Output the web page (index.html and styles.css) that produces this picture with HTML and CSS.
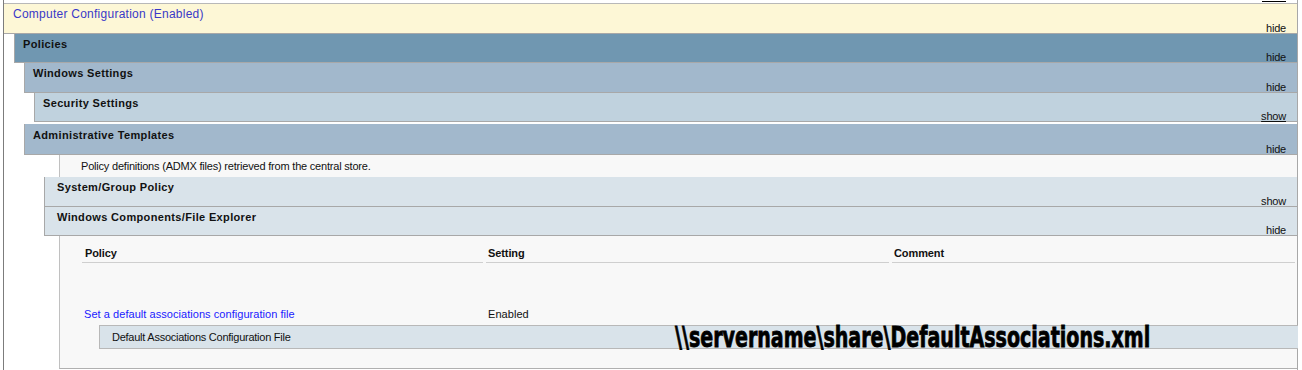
FILE: index.html
```html
<!DOCTYPE html>
<html lang="en">
<head>
    <meta charset="UTF-8">
    <title>Group Policy Report</title>
    <link rel="stylesheet" href="styles.css">
</head>
<body>

<div class="report">
    <div class="topline"><span class="tail"></span></div>

    <div class="section">
        <div class="head h0"><span class="title">Computer Configuration (Enabled)</span><span class="toggle">hide</span></div>
        <div class="body">

            <div class="section lvl">
                <div class="head h1"><span class="title">Policies</span><span class="toggle">hide</span></div>
                <div class="body">

                    <div class="section lvl spaced">
                        <div class="head h2"><span class="title">Windows Settings</span><span class="toggle">hide</span></div>
                        <div class="body">
                            <div class="section lvl">
                                <div class="head h3"><span class="title">Security Settings</span><span class="toggle hover">show</span></div>
                            </div>
                        </div>
                    </div>

                    <div class="section lvl">
                        <div class="head h2 adm"><span class="title">Administrative Templates</span><span class="toggle">hide</span></div>
                        <div class="body">
                            <div class="explain">Policy definitions (ADMX files) retrieved from the central store.</div>

                            <div class="section lvl2">
                                <div class="head h4"><span class="title">System/Group Policy</span><span class="toggle">show</span></div>
                            </div>

                            <div class="section lvl2">
                                <div class="head h4 short"><span class="title">Windows Components/File Explorer</span><span class="toggle">hide</span></div>
                                <div class="body">
                                    <div class="policies">
                                        <div class="grid">
                                            <div class="th first">Policy</div>
                                            <div class="th">Setting</div>
                                            <div class="th">Comment</div>
                                        </div>
                                        <div class="grid row">
                                            <div class="td"><span class="link">Set a default associations configuration file</span></div>
                                            <div class="td">Enabled</div>
                                            <div class="td"></div>
                                        </div>
                                        <div class="subrow">
                                            <span class="sublabel">Default Associations Configuration File</span>
                                            <span class="subvalue">\\servername\share\DefaultAssociations.xml</span>
                                        </div>
                                    </div>
                                </div>
                            </div>

                        </div>
                    </div>

                </div>
            </div>

        </div>
    </div>
</div>

</body>
</html>
```

FILE: styles.css
```css
body {
    margin: 0;
    font-family: "Liberation Sans", Arial, sans-serif;
    font-size: 11px;
    color: #111;
    background: #fff;
}
.report {
    margin-left: 3px;
    width: 1293px;
    border-left: 1px solid #7c7c7c;
    border-right: 1px solid #a8a8a8;
    height: 370px;
}
.topline {
    height: 3px;
    border-bottom: 1px solid #b8b8b8;
    display: flex;
    justify-content: flex-end;
}
.tail {
    width: 24px;
    height: 1px;
    margin: 1px 11px 0 0;
    background: #000;
}
.lvl {
    margin-left: 10px;
}
.lvl2 {
    margin-left: 20px;
}
.spaced {
    margin-bottom: 2px;
}
.head {
    box-sizing: border-box;
    height: 30px;
    display: flex;
    flex-direction: column;
    justify-content: space-between;
    padding: 4px 11px 0 8px;
    border-left: 1px solid #a8a8a8;
    border-bottom: 1px solid #a8a8a8;
}
.head .title {
    font-weight: bold;
    line-height: 13px;
    letter-spacing: 0.35px;
}
.toggle {
    align-self: flex-end;
    line-height: 10px;
    letter-spacing: -0.2px;
}
.hover {
    text-decoration: underline;
}
.h0 {
    background: #fdf7d6;
    border-left: none;
    padding: 3px 11px 0 9px;
}
.h0 .title {
    font-weight: normal;
    font-size: 12px;
    line-height: 14px;
    letter-spacing: 0.25px;
    color: #3a38c8;
}
.h1 {
    height: 29px;
    background: #7097b1;
}
.h2 {
    background: #a2b8cc;
}
.adm {
    height: 31px;
    padding-top: 5px;
}
.h3 {
    height: 29px;
    background: #c0d2de;
}
.h4 {
    background: #d9e3ea;
    padding-left: 12px;
}
.short {
    height: 29px;
}
.explain {
    margin-left: 35px;
    height: 22px;
    box-sizing: border-box;
    padding: 5px 0 0 21px;
    border-left: 1px solid #c0c0c0;
    background: #f8f8f8;
    letter-spacing: -0.2px;
}
.policies {
    margin-left: 15px;
    height: 133px;
    box-sizing: border-box;
    padding: 9px 2px 0 22px;
    border-left: 1px solid #c0c0c0;
    border-bottom: 1px solid #b0b0b0;
    background: #f8f8f8;
}
.grid {
    display: grid;
    grid-template-columns: 401px 403px 1fr;
    column-gap: 3px;
}
.th {
    font-weight: bold;
    line-height: 14px;
    padding: 1px 0 2px 2px;
    border-bottom: 1px solid #cfcfcf;
    letter-spacing: -0.1px;
}
.th.first {
    padding-left: 3px;
}
.row {
    margin-top: 44px;
}
.td {
    line-height: 14px;
    padding-left: 2px;
    letter-spacing: 0.05px;
}
.link {
    color: #1a1aff;
}
.subrow {
    display: flex;
    align-items: center;
    margin: 4px -3px 0 17px;
    height: 24px;
    box-sizing: border-box;
    border: 1px solid #b8b8b8;
    border-right: none;
    background: #d9e3ea;
}
.sublabel {
    flex-shrink: 0;
    width: 563px;
    padding-left: 12px;
    letter-spacing: -0.25px;
}
.subvalue {
    flex-shrink: 0;
    display: inline-block;
    font-family: "DejaVu Sans Condensed", "DejaVu Sans", sans-serif;
    font-weight: bold;
    font-size: 29px;
    line-height: 22px;
    color: #000;
    -webkit-text-stroke: 0.8px #000;
    transform: scaleX(0.73);
    transform-origin: left center;
    white-space: nowrap;
}
```
